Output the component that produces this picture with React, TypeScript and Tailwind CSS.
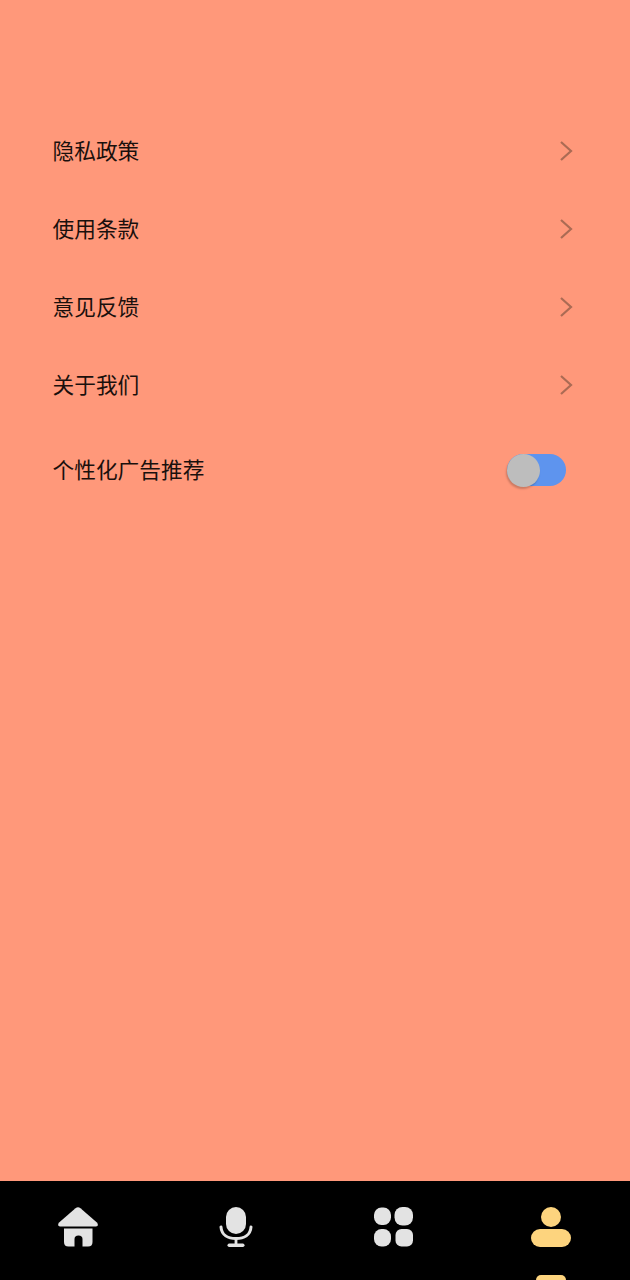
const rows = ['隐私政策', '使用条款', '意见反馈', '关于我们'];

function Chevron() {
  return (
    <svg width="14" height="22" viewBox="0 0 14 22" fill="none" stroke="#ab6b54" strokeWidth="2.2">
      <polyline points="2,2 12,11 2,20" />
    </svg>
  );
}

function HomeIcon() {
  return (
    <svg width="40" height="40" viewBox="0 0 40 40" fill="#e3e3e3">
      <path d="M17.5 1.2 Q20 -0.6 22.5 1.2 L39.2 15.8 Q41 19.5 38 19.5 L2 19.5 Q-1 19.5 0.8 15.8 Z" />
      <path d="M6 21.5 L34.5 21.5 L34.5 35 Q34.5 39.5 30 39.5 L24.5 39.5 L24.5 32 Q24.5 28.5 20.5 28.5 Q16.5 28.5 16.5 32 L16.5 39.5 L10.5 39.5 Q6 39.5 6 35 Z" />
    </svg>
  );
}

function MicIcon() {
  return (
    <svg width="34" height="40" viewBox="0 0 34 40" fill="#e3e3e3">
      <rect x="7" y="0" width="20" height="27" rx="10" />
      <path d="M2 20 C2.5 28 9 31.5 17 31.5 C25 31.5 31.5 28 32 20" fill="none" stroke="#e3e3e3" strokeWidth="3" strokeLinecap="round" />
      <rect x="15.6" y="31" width="2.8" height="6" />
      <rect x="8.5" y="36.5" width="17" height="3.5" rx="1.7" />
    </svg>
  );
}

function AppsIcon() {
  return (
    <svg width="40" height="40" viewBox="0 0 40 40" fill="#e3e3e3">
      <rect x="0" y="0.5" width="17" height="17.5" rx="7.5" />
      <rect x="20.5" y="0" width="18.5" height="18.5" rx="8" />
      <rect x="0" y="22" width="17" height="17.5" rx="7.5" />
      <rect x="21.5" y="22" width="17.5" height="17.5" rx="6" />
    </svg>
  );
}

function PersonIcon() {
  return (
    <svg width="40" height="40" viewBox="0 0 40 40" fill="#fdd47e">
      <circle cx="20" cy="10" r="10" />
      <rect x="0" y="22" width="40" height="18" rx="9" />
    </svg>
  );
}

export default function App() {
  return (
    <div className="w-[630px] h-[1280px] bg-[#ff987a] flex flex-col font-['Noto_Sans_CJK_SC',sans-serif] text-[21.7px] text-[#1a100d]">
      <div className="flex-1 pt-[112px]">
        {rows.map((label) => (
          <div key={label} className="h-[78px] pl-[52.5px] pr-[57px] flex items-center justify-between">
            <span className="pb-[2px]">{label}</span>
            <Chevron />
          </div>
        ))}
        <div className="h-[92px] pl-[52.5px] pr-[64px] flex items-center justify-between">
          <span className="pb-[2px]">个性化广告推荐</span>
          <div className="relative w-[59px] h-[32px] rounded-full bg-[#5e94ee]">
            <div className="absolute left-0 top-0 w-[33px] h-[33px] -mt-[0.5px] rounded-full bg-[#bdbdbd] shadow-[-1px_2px_2px_rgba(0,0,0,0.2)]" />
          </div>
        </div>
      </div>

      <div className="h-[99px] bg-black grid grid-cols-4 overflow-hidden">
        <div className="flex justify-center pt-[26px] pr-[1px]"><HomeIcon /></div>
        <div className="flex justify-center pt-[26px]"><MicIcon /></div>
        <div className="flex justify-center pt-[26px]"><AppsIcon /></div>
        <div className="flex flex-col items-center pt-[26px]">
          <PersonIcon />
          <div className="w-[30px] h-[12px] mt-[28px] rounded-t-[5px] bg-[#fdd47e] shrink-0" />
        </div>
      </div>
    </div>
  );
}
